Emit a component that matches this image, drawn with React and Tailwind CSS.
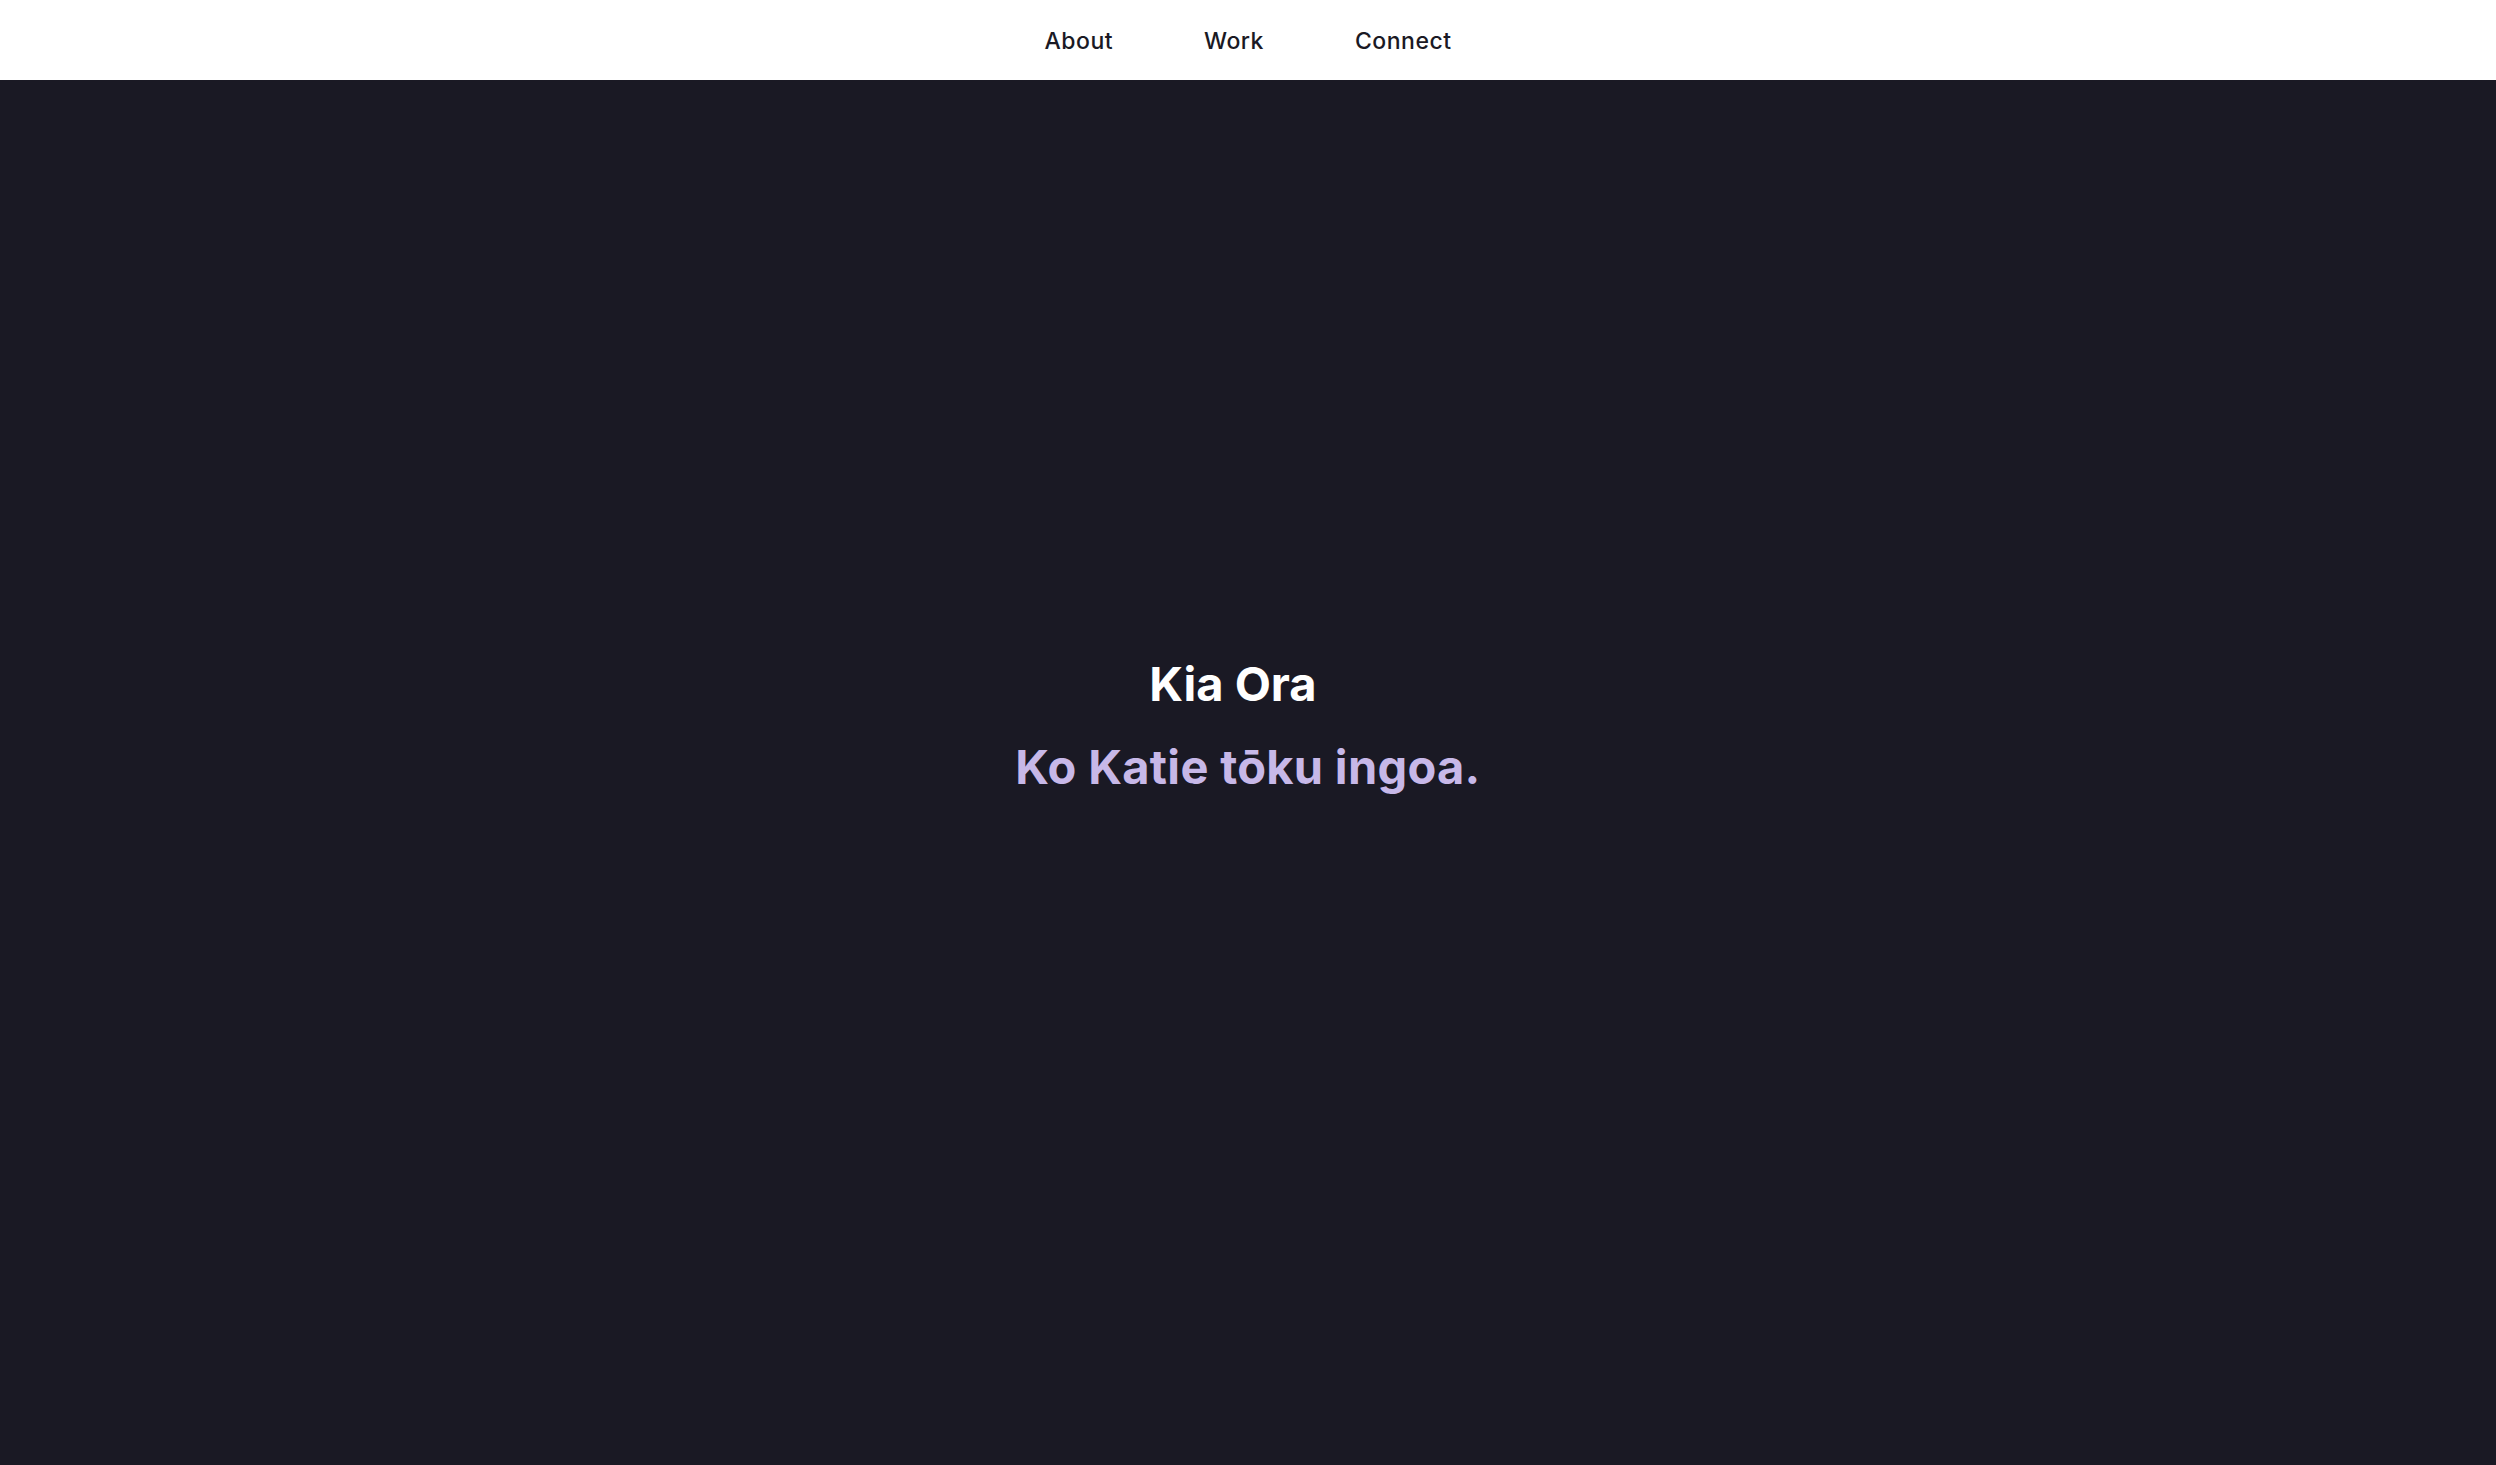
export default function App() {
  const links = ["About", "Work", "Connect"];

  return (
    <div className="min-h-screen bg-[#1a1924] font-['Inter',sans-serif]">
      {/* Top nav */}
      <nav className="fixed top-0 left-0 right-0 h-[80px] bg-white flex items-center justify-center pt-[3px]">
        <ul className="flex items-center gap-[91px]">
          {links.map((l) => (
            <li key={l} className="text-[23px] font-medium text-[#1a1924] tracking-[0.5px]">
              {l}
            </li>
          ))}
        </ul>
      </nav>

      {/* Hero */}
      <main className="h-screen flex flex-col items-center justify-center pb-[16px]">
        <h1 className="text-[47px] font-bold text-white leading-none pr-[30px]">Kia Ora</h1>
        <h2 className="mt-[36px] text-[47px] font-bold text-[#c7b8e8] leading-none tracking-[0.3px]">
          Ko Katie tōku ingoa.
        </h2>
      </main>
    </div>
  );
}
